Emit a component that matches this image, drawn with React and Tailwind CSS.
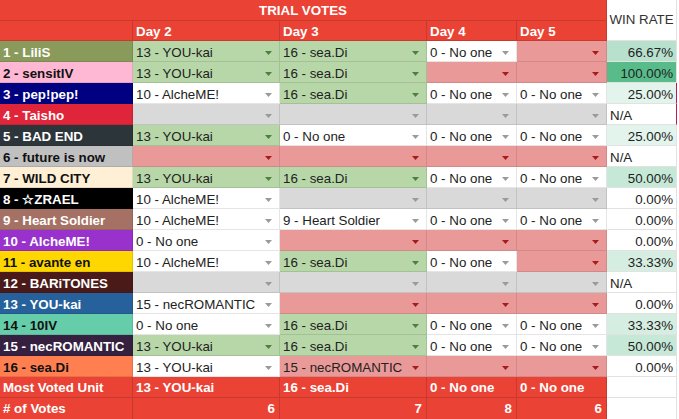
const FILL = {
  g: 'bg-[#b7d7a8]',
  r: 'bg-[#ea9999]',
  w: 'bg-white',
  x: 'bg-[#d9d9d9]',
}

const ARROW = { g: '#4f7f3f', r: '#a61c1c', w: '#9a9a9a', x: '#9a9a9a' }

const units = [
  { name: '1 - LiliS', cls: 'bg-[#8a9a5b] text-white', days: [['g', '13 - YOU-kai'], ['g', '16 - sea.Di'], ['w', '0 - No one'], ['r', '']], rate: '66.67%', rateBg: 'bg-[#b7e1cd]' },
  { name: '2 - sensitIV', cls: 'bg-[#ffb8d4] text-[#111]', days: [['g', '13 - YOU-kai'], ['g', '16 - sea.Di'], ['r', ''], ['r', '']], rate: '100.00%', rateBg: 'bg-[#57bb8a]' },
  { name: '3 - pep!pep!', cls: 'bg-[#000080] text-white', days: [['w', '10 - AlcheME!'], ['g', '16 - sea.Di'], ['w', '0 - No one'], ['w', '0 - No one']], rate: '25.00%', rateBg: 'bg-[#e3f4ec]', mark: true },
  { name: '4 - Taisho', cls: 'bg-[#e0243a] text-white', days: [['x', ''], ['x', ''], ['x', ''], ['x', '']], rate: 'N/A', mark: true },
  { name: '5 - BAD END', cls: 'bg-[#2c3539] text-white', days: [['g', '13 - YOU-kai'], ['w', '0 - No one'], ['w', '0 - No one'], ['w', '0 - No one']], rate: '25.00%', rateBg: 'bg-[#e3f4ec]' },
  { name: '6 - future is now', cls: 'bg-[#c0c0c0] text-[#111]', days: [['r', ''], ['r', ''], ['r', ''], ['r', '']], rate: 'N/A' },
  { name: '7 - WILD CITY', cls: 'bg-[#ffefd5] text-[#111]', days: [['g', '13 - YOU-kai'], ['g', '16 - sea.Di'], ['w', '0 - No one'], ['w', '0 - No one']], rate: '50.00%', rateBg: 'bg-[#c6e8d7]' },
  { name: '8 - ☆ZRAEL', cls: 'bg-black text-white', days: [['w', '10 - AlcheME!'], ['x', ''], ['x', ''], ['x', '']], rate: '0.00%' },
  { name: '9 - Heart Soldier', cls: 'bg-[#a57164] text-white', days: [['w', '10 - AlcheME!'], ['w', '9 - Heart Soldier'], ['w', '0 - No one'], ['w', '0 - No one']], rate: '0.00%' },
  { name: '10 - AlcheME!', cls: 'bg-[#9932cc] text-white', days: [['w', '0 - No one'], ['r', ''], ['r', ''], ['r', '']], rate: '0.00%' },
  { name: '11 - avante en', cls: 'bg-[#ffd700] text-[#111]', days: [['w', '10 - AlcheME!'], ['g', '16 - sea.Di'], ['w', '0 - No one'], ['r', '']], rate: '33.33%', rateBg: 'bg-[#d6eee2]' },
  { name: '12 - BARiTONES', cls: 'bg-[#4a1a18] text-white', days: [['x', ''], ['x', ''], ['x', ''], ['x', '']], rate: 'N/A' },
  { name: '13 - YOU-kai', cls: 'bg-[#26619c] text-white', days: [['w', '15 - necROMANTIC'], ['r', ''], ['r', ''], ['r', '']], rate: '0.00%' },
  { name: '14 - 10IV', cls: 'bg-[#66cdaa] text-[#111]', days: [['w', '0 - No one'], ['g', '16 - sea.Di'], ['w', '0 - No one'], ['w', '0 - No one']], rate: '33.33%', rateBg: 'bg-[#d6eee2]' },
  { name: '15 - necROMANTIC', cls: 'bg-[#35213f] text-white', days: [['g', '13 - YOU-kai'], ['g', '16 - sea.Di'], ['w', '0 - No one'], ['w', '0 - No one']], rate: '50.00%', rateBg: 'bg-[#c6e8d7]' },
  { name: '16 - sea.Di', cls: 'bg-[#ff7f50] text-[#111]', days: [['w', '13 - YOU-kai'], ['r', '15 - necROMANTIC'], ['r', ''], ['r', '']], rate: '0.00%' },
]

const mostVoted = ['13 - YOU-kai', '16 - sea.Di', '0 - No one', '0 - No one']
const votes = [6, 7, 8, 6]

function Dropdown({ fill, text }) {
  return (
    <div className={`flex overflow-hidden border-r border-b border-black/10 ${FILL[fill]}`}>
      <span className="flex-1 overflow-hidden whitespace-nowrap pl-[3px] pt-[3px] leading-[18px] text-[#222]">{text}</span>
      <svg width="7" height="4" viewBox="0 0 7 4" className="mr-[7px] mt-[10px] shrink-0">
        <path d="M0 0h7L3.5 4z" fill={ARROW[fill]} />
      </svg>
    </div>
  )
}

export default function App() {
  return (
    <div className="w-[679px] h-[419px] overflow-hidden bg-white font-['Liberation_Sans',Arial,sans-serif] text-[13.33px]">
      <div className="grid grid-cols-[133px_147px_147px_90px_90px_70px] grid-rows-[21px_20px_repeat(18,21px)]">
        {/* title + headers */}
        <div className="col-span-5 border-r border-b border-[#c8392e] bg-[#ea4335] pt-[2px] text-center font-bold leading-[18px] text-white">
          TRIAL VOTES
        </div>
        <div className="row-span-2 flex items-center justify-center border-r border-b border-[#e2e2e2] text-[#333]">
          WIN RATE
        </div>
        <div className="border-r border-b border-[#c8392e] bg-[#ea4335]" />
        {['Day 2', 'Day 3', 'Day 4', 'Day 5'].map(d => (
          <div key={d} className="border-r border-b border-[#c8392e] bg-[#ea4335] pl-[3px] pt-[2px] font-bold leading-[17px] text-white">
            {d}
          </div>
        ))}

        {/* units */}
        {units.map(u => (
          <div key={u.name} className="contents">
            <div className={`overflow-hidden whitespace-nowrap border-r border-b border-black/10 pl-[3px] pt-[3px] font-bold leading-[18px] ${u.cls}`}>
              {u.name}
            </div>
            {u.days.map(([f, t], i) => (
              <Dropdown key={i} fill={f} text={t} />
            ))}
            <div className={`border-b border-r pt-[3px] leading-[18px] text-[#222] ${u.mark ? 'border-r-[#c2185b]' : 'border-r-[#e2e2e2]'} border-b-[#e2e2e2] ${u.rateBg || 'bg-white'} ${u.rate === 'N/A' ? 'pl-[3px] text-left' : 'pr-[3px] text-right'}`}>
              {u.rate}
            </div>
          </div>
        ))}

        {/* totals */}
        <div className="border-r border-b border-[#c8392e] bg-[#ea4335] pl-[3px] pt-[2px] font-bold leading-[18px] text-white whitespace-nowrap">
          Most Voted Unit
        </div>
        {mostVoted.map((m, i) => (
          <div key={i} className="border-r border-b border-[#c8392e] bg-[#ea4335] pl-[3px] pt-[2px] font-bold leading-[18px] text-white whitespace-nowrap">
            {m}
          </div>
        ))}
        <div className="border-r border-b border-[#e2e2e2]" />

        <div className="border-r border-[#c8392e] bg-[#ea4335] pl-[3px] pt-[2px] font-bold leading-[18px] text-white">
          # of Votes
        </div>
        {votes.map((v, i) => (
          <div key={i} className="border-r border-[#c8392e] bg-[#ea4335] pr-[4px] pt-[2px] text-right font-bold leading-[18px] text-white">
            {v}
          </div>
        ))}
        <div className="border-r border-[#e2e2e2]" />
      </div>
    </div>
  )
}
